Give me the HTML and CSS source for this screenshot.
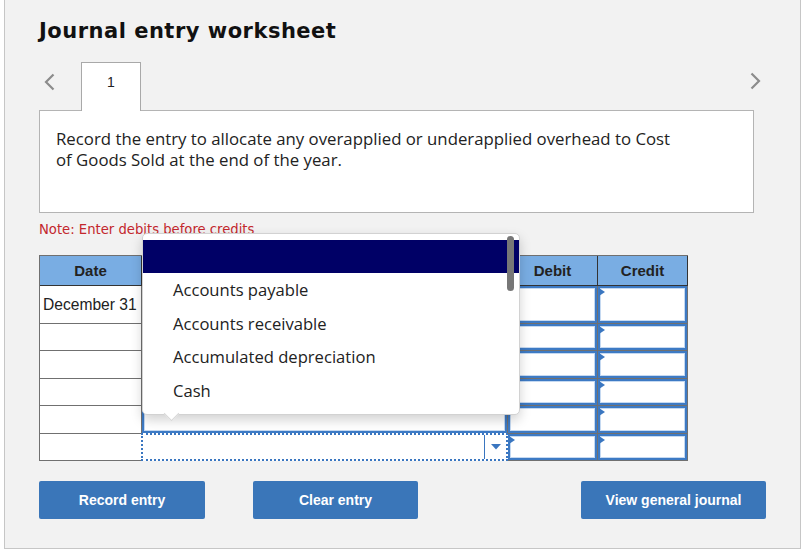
FILE: index.html
```html
<!DOCTYPE html>
<html lang="en">
<head>
<meta charset="utf-8">
<title>Journal entry worksheet</title>
<link rel="stylesheet" href="styles.css">
</head>
<body>
<div class="panel">
  <h1 class="title">Journal entry worksheet</h1>
  <div class="tabs">
    <svg class="nav-arrow" width="12" height="18" viewBox="0 0 12 18"><path d="M10.5 1.5 L3 9 L10.5 16.5" fill="none" stroke="#8c8c8c" stroke-width="2.2"/></svg>
    <div class="tab">1</div>
    <svg class="nav-arrow nav-next" width="12" height="18" viewBox="0 0 12 18"><path d="M1.5 1.5 L9 9 L1.5 16.5" fill="none" stroke="#8c8c8c" stroke-width="2.2"/></svg>
  </div>
  <div class="prompt">Record the entry to allocate any overapplied or underapplied overhead to Cost of Goods Sold at the end of the year.</div>
  <div class="note">Note: Enter debits before credits</div>
  <div class="journal">
    <div class="grid">
      <div class="hcell">Date</div>
      <div class="hcell"></div>
      <div class="hcell">Debit</div>
      <div class="hcell">Credit</div>

      <div class="cell date">December 31</div>
      <div class="cell"><div class="input"></div></div>
      <div class="cell"><div class="input"><span class="mark"></span></div></div>
      <div class="cell"><div class="input"><span class="mark"></span></div></div>

      <div class="cell"></div>
      <div class="cell"><div class="input"></div></div>
      <div class="cell"><div class="input"><span class="mark"></span></div></div>
      <div class="cell"><div class="input"><span class="mark"></span></div></div>

      <div class="cell"></div>
      <div class="cell"><div class="input"></div></div>
      <div class="cell"><div class="input"><span class="mark"></span></div></div>
      <div class="cell"><div class="input"><span class="mark"></span></div></div>

      <div class="cell"></div>
      <div class="cell"><div class="input"></div></div>
      <div class="cell"><div class="input"><span class="mark"></span></div></div>
      <div class="cell"><div class="input"><span class="mark"></span></div></div>

      <div class="cell"></div>
      <div class="cell"><div class="input"></div></div>
      <div class="cell"><div class="input"><span class="mark"></span></div></div>
      <div class="cell"><div class="input"><span class="mark"></span></div></div>

      <div class="cell"></div>
      <div class="cell focus">
        <div class="select-space"></div>
        <div class="select-button"><svg width="10" height="6" viewBox="0 0 10 6"><path d="M0 0 H10 L5 5.5 Z" fill="#3a76c0"/></svg></div>
      </div>
      <div class="cell"><div class="input"><span class="mark"></span></div></div>
      <div class="cell"><div class="input"><span class="mark"></span></div></div>
    </div>

    <div class="popup">
      <div class="option selected"></div>
      <div class="option">Accounts payable</div>
      <div class="option">Accounts receivable</div>
      <div class="option">Accumulated depreciation</div>
      <div class="option">Cash</div>
      <span class="thumb"></span>
      <span class="notch"></span>
    </div>
  </div>
  <div class="actions">
    <button class="btn">Record entry</button>
    <button class="btn btn-clear">Clear entry</button>
    <button class="btn btn-view">View general journal</button>
  </div>
</div>
</body>
</html>
```
FILE: styles.css
```css
html, body {
  margin: 0;
  padding: 0;
  background: #ffffff;
}

.panel {
  box-sizing: border-box;
  width: 797px;
  height: 550px;
  margin: -1px 0 0 4px;
  padding: 0 34px;
  border: 1px solid #c6c6c6;
  background: #f2f2f2;
  overflow: hidden;
}

.title {
  margin: 19px 0 0;
  font-family: "DejaVu Sans", Verdana, sans-serif;
  font-weight: bold;
  font-size: 21px;
  letter-spacing: 0.5px;
  line-height: 24px;
  color: #111;
}

.tabs {
  display: flex;
  align-items: flex-start;
  height: 49px;
  margin-top: 19px;
}

.nav-arrow {
  display: block;
  margin: 11px 0 0 4px;
}

.nav-next {
  margin: 10px 4px 0 auto;
}

.tab {
  position: relative;
  z-index: 1;
  box-sizing: border-box;
  width: 60px;
  height: 49px;
  margin-left: 26px;
  padding-top: 11px;
  border: 1px solid #a9a9a9;
  border-bottom: none;
  background: #fff;
  text-align: center;
  font-family: "Liberation Sans", Arial, sans-serif;
  font-size: 14px;
  line-height: 16px;
  color: #222;
}

.prompt {
  box-sizing: border-box;
  width: 715px;
  height: 103px;
  margin-top: -1px;
  padding: 17px 70px 0 16px;
  border: 1px solid #b4b4b4;
  background: #fff;
  font-family: "Open Sans", "Noto Sans", sans-serif;
  font-size: 16.8px;
  line-height: 21px;
  color: #222;
}

.note {
  margin-top: 10px;
  font-family: "DejaVu Sans", Verdana, sans-serif;
  font-size: 13.2px;
  line-height: 14px;
  color: #c3272d;
}

.journal {
  position: relative;
  margin-top: 18px;
}

.grid {
  display: grid;
  grid-template-columns: 102px 366px 90px 90px;
  grid-template-rows: 30px 38px 27px 28px 27px 28px 27px;
  width: 649px;
  box-sizing: border-box;
  border-left: 1px solid #707070;
  border-top: 1px solid #707070;
  background: #fff;
}

.hcell {
  box-sizing: border-box;
  display: flex;
  align-items: center;
  justify-content: center;
  border-right: 1px solid #333;
  border-bottom: 1px solid #333;
  background: #79ade3;
  font-family: "Liberation Sans", Arial, sans-serif;
  font-weight: bold;
  font-size: 15px;
  color: #222;
}

.cell {
  box-sizing: border-box;
  position: relative;
  display: flex;
  border-right: 1px solid #707070;
  border-bottom: 1px solid #707070;
  background: #fff;
}

.date {
  align-items: center;
  padding-left: 3px;
  font-family: "Liberation Sans", Arial, sans-serif;
  font-size: 15.6px;
  color: #222;
}

.input {
  flex: 1;
  position: relative;
  border: 2px solid #3d7ac4;
  box-shadow: inset 0 0 0 1px #c5d9f1;
  background: #fff;
}

.mark {
  position: absolute;
  top: 0;
  left: -1px;
  width: 0;
  height: 0;
  border-left: 6px solid #3a76c0;
  border-top: 4px solid transparent;
  border-bottom: 4px solid transparent;
}

.focus {
  margin: -1px 0 0 -1px;
  border: 2px dotted #3a76c0;
}

.select-space {
  flex: 1;
}

.select-button {
  display: flex;
  align-items: center;
  justify-content: center;
  width: 21px;
  border-left: 1px solid #3a76c0;
}

.popup {
  position: absolute;
  z-index: 5;
  left: 103px;
  top: -22px;
  box-sizing: border-box;
  width: 378px;
  height: 182px;
  padding-top: 6px;
  border: 1px solid #d2d2d2;
  border-radius: 5px;
  background: #fff;
  box-shadow: 0 5px 12px rgba(0, 0, 0, 0.18);
  font-family: "Open Sans", "Noto Sans", sans-serif;
  font-size: 16.6px;
  color: #222;
}

.option {
  height: 33.4px;
  line-height: 33px;
  padding-left: 30px;
  white-space: nowrap;
}

.option.selected {
  background: #000066;
}

.thumb {
  position: absolute;
  top: 2px;
  right: 5px;
  width: 7px;
  height: 55px;
  border-radius: 4px;
  background: #777;
}

.notch {
  position: absolute;
  left: 23px;
  bottom: -5px;
  width: 10px;
  height: 10px;
  background: #fff;
  transform: rotate(45deg);
  border-right: 1px solid #d8d8d8;
  border-bottom: 1px solid #d8d8d8;
}

.actions {
  display: flex;
  margin-top: 20px;
}

.btn {
  box-sizing: border-box;
  height: 38px;
  width: 166px;
  border: none;
  border-radius: 2px;
  background: #3a76b9;
  color: #fff;
  font-family: "Liberation Sans", Arial, sans-serif;
  font-weight: bold;
  font-size: 14px;
  padding: 0;
}

.btn-clear {
  width: 165px;
  margin-left: 48px;
}

.btn-view {
  width: 185px;
  margin-left: auto;
}
```
